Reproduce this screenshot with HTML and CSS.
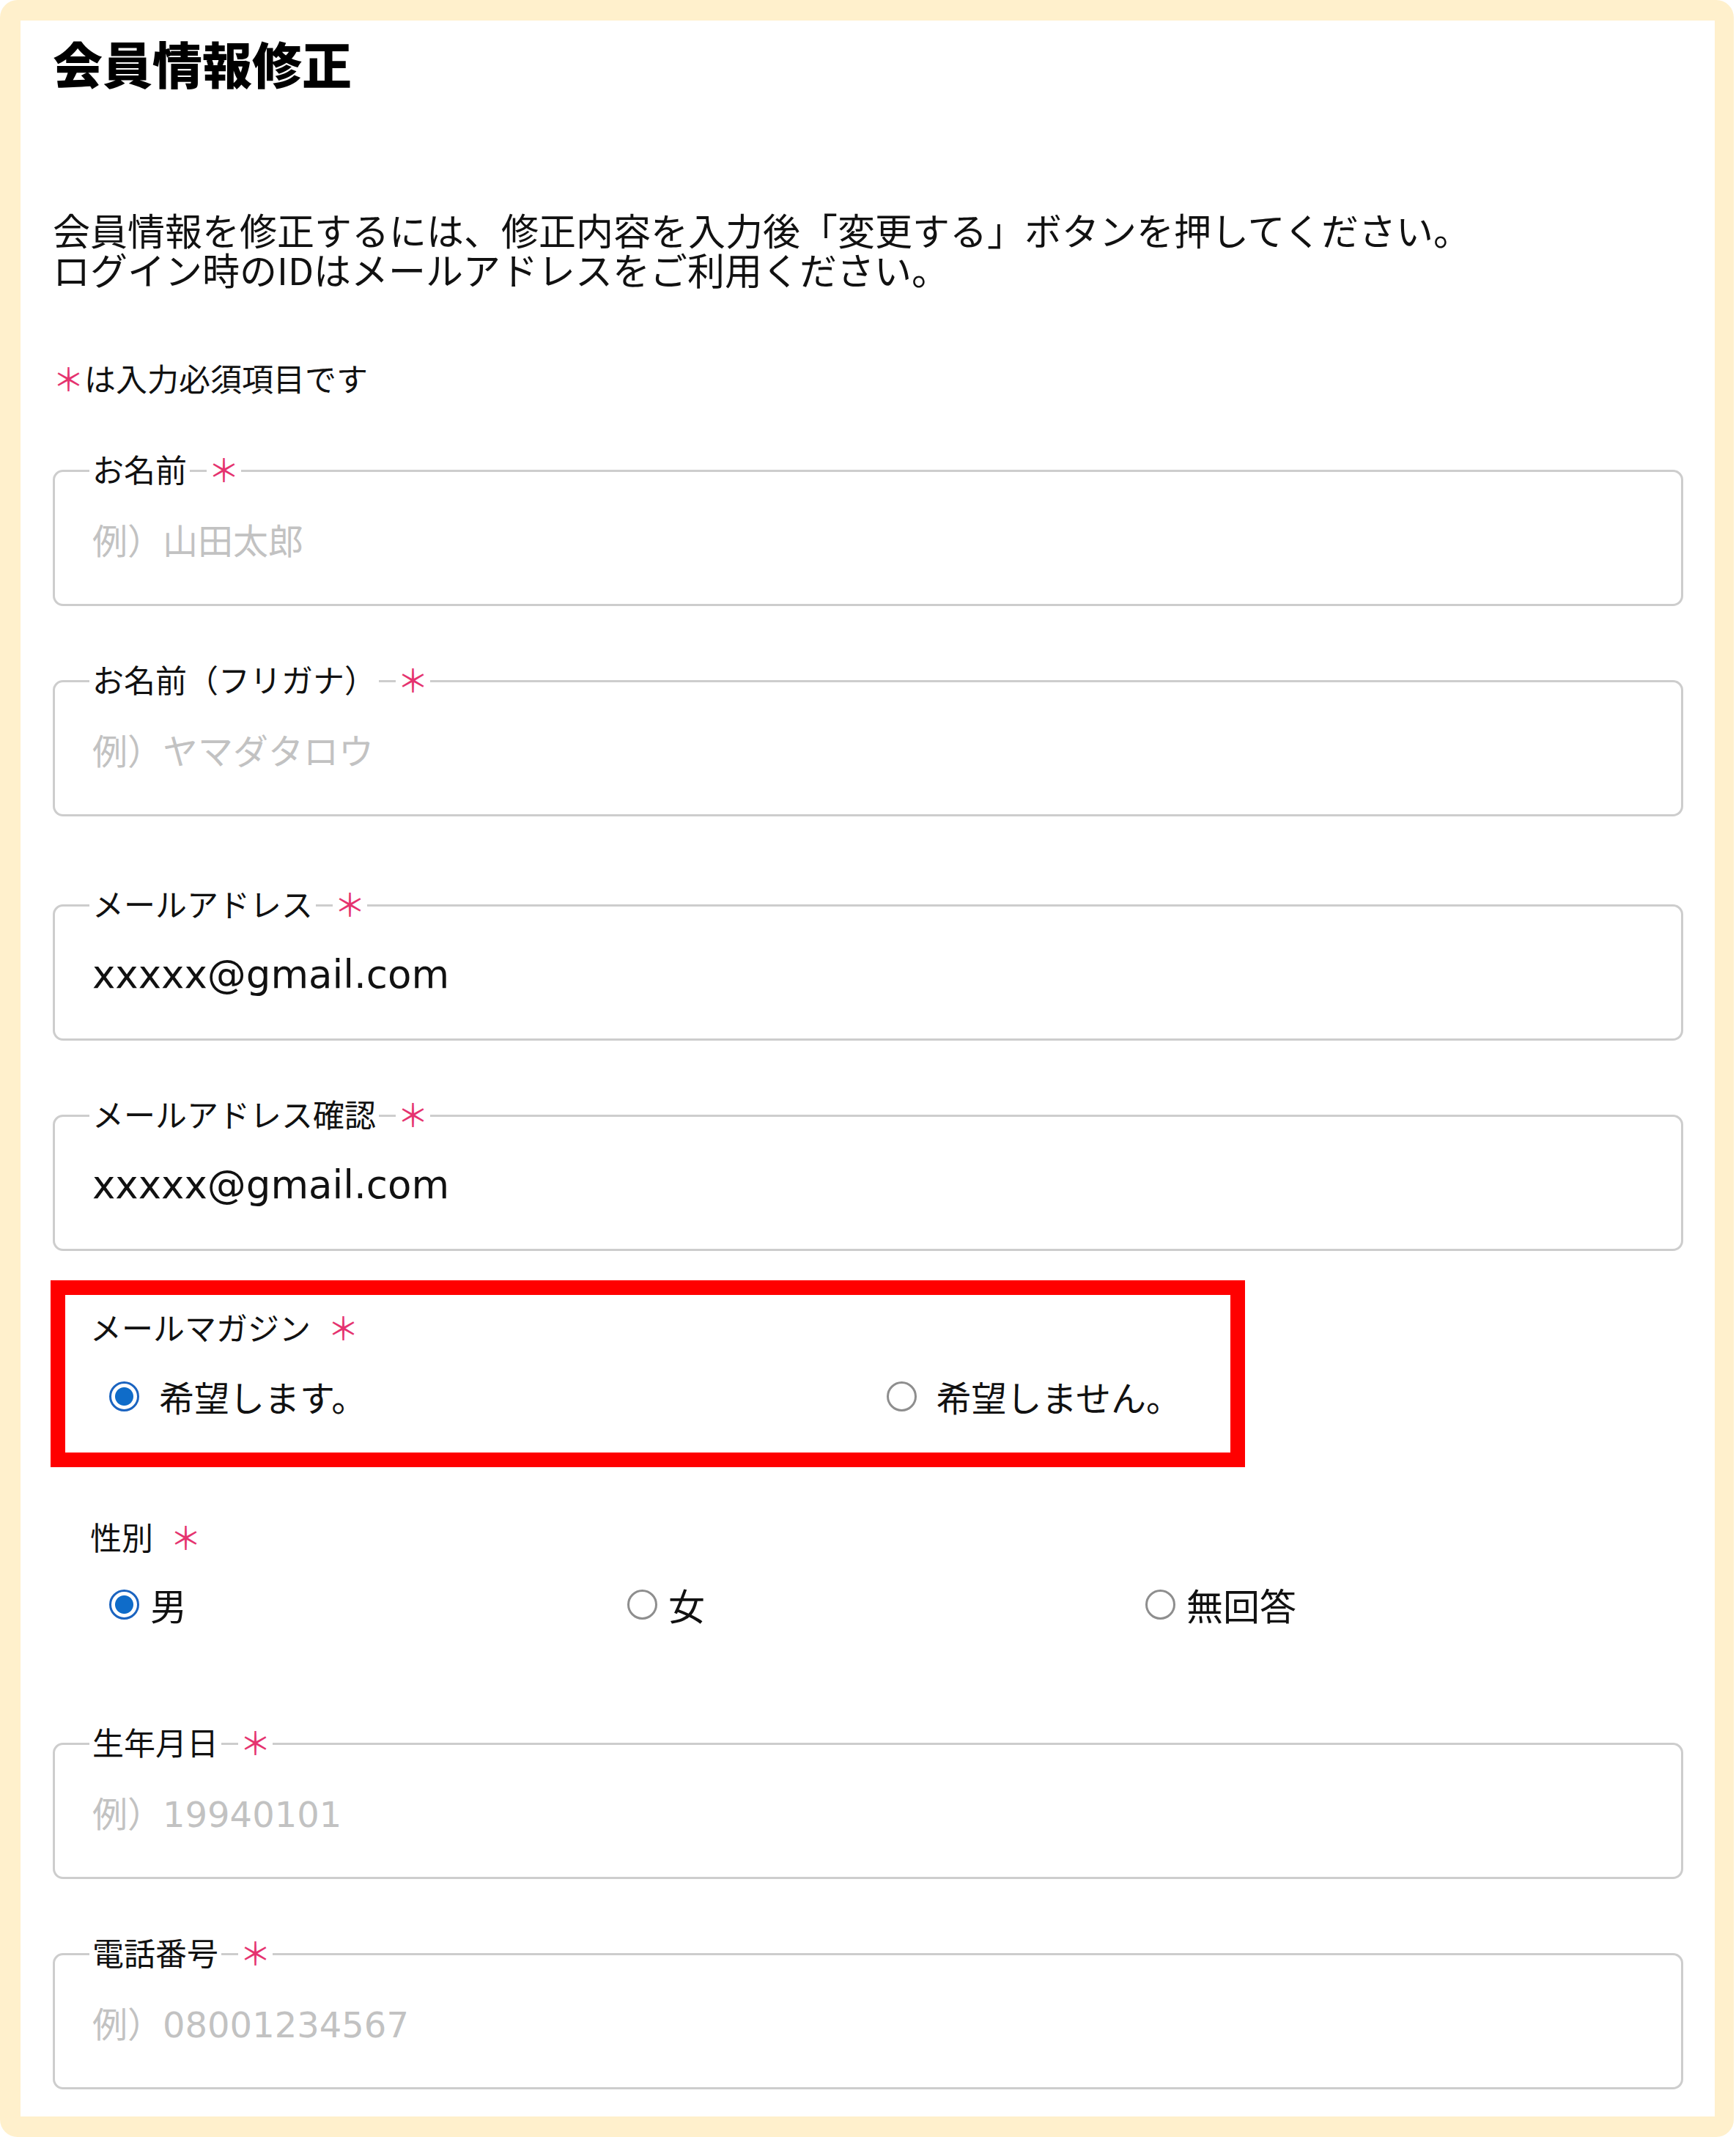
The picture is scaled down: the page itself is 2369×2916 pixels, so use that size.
FILE: index.html
```html
<!DOCTYPE html>
<html lang="ja">
<head>
<meta charset="utf-8">
<title>会員情報修正</title>
<link rel="stylesheet" href="styles.css">
</head>
<body>
<div class="frame">
  <main class="panel">
    <h1 class="title">会員情報修正</h1>
    <p class="lead">会員情報を修正するには、修正内容を入力後「変更する」ボタンを押してください。<br>ログイン時のIDはメールアドレスをご利用ください。</p>
    <p class="note"><span class="req">＊</span>は入力必須項目です</p>

    <form class="form">
      <div class="field">
        <label class="field-label"><span class="lbl">お名前</span><span class="req star">＊</span></label>
        <input class="input" type="text" placeholder="例）山田太郎">
      </div>
      <div class="field">
        <label class="field-label"><span class="lbl">お名前（フリガナ）</span><span class="req star">＊</span></label>
        <input class="input" type="text" placeholder="例）ヤマダタロウ">
      </div>
      <div class="field field-wide-gap">
        <label class="field-label"><span class="lbl">メールアドレス</span><span class="req star">＊</span></label>
        <input class="input input-value" type="email" value="xxxxx@gmail.com">
      </div>
      <div class="field">
        <label class="field-label"><span class="lbl">メールアドレス確認</span><span class="req star">＊</span></label>
        <input class="input input-value" type="email" value="xxxxx@gmail.com">
      </div>

      <div class="choice choice-magazine">
        <div class="choice-label">メールマガジン<span class="req star-plain">＊</span></div>
        <div class="options options-two">
          <label class="opt opt-magazine"><input class="radio" type="radio" name="magazine" checked>希望します。</label>
          <label class="opt opt-magazine"><input class="radio" type="radio" name="magazine">希望しません。</label>
        </div>
        <div class="highlight"></div>
      </div>

      <div class="choice choice-gender">
        <div class="choice-label">性別<span class="req star-plain">＊</span></div>
        <div class="options options-three">
          <label class="opt opt-gender"><input class="radio" type="radio" name="gender" checked>男</label>
          <label class="opt opt-gender"><input class="radio" type="radio" name="gender">女</label>
          <label class="opt opt-gender"><input class="radio" type="radio" name="gender">無回答</label>
        </div>
      </div>

      <div class="field field-after-choice">
        <label class="field-label"><span class="lbl">生年月日</span><span class="req star">＊</span></label>
        <input class="input input-num" type="text" placeholder="例）19940101">
      </div>
      <div class="field">
        <label class="field-label"><span class="lbl">電話番号</span><span class="req star">＊</span></label>
        <input class="input input-num" type="tel" placeholder="例）08001234567">
      </div>
    </form>
  </main>
</div>
</body>
</html>
```

FILE: styles.css
```css
* {
  box-sizing: border-box;
}

html,
body {
  margin: 0;
  padding: 0;
  background: #ffffff;
}

body {
  font-family: "Noto Sans CJK JP", "Noto Sans", sans-serif;
  color: #111111;
}

.frame {
  width: 2366px;
  height: 2916px;
  background: #fff0cc;
  border-radius: 24px;
  padding: 28px 26px 28px 28px;
}

.panel {
  display: block;
  height: 100%;
  background: #ffffff;
  padding: 24px 43px 0 44px;
}

.title {
  margin: 0;
  font-size: 68px;
  line-height: 68px;
  font-weight: 900;
  color: #000000;
}

.lead {
  margin: 166px 0 0;
  font-size: 51px;
  line-height: 54px;
  white-space: nowrap;
}

.note {
  margin: 100px 0 0;
  font-size: 43px;
  line-height: 43px;
}

.req {
  color: #e5336f;
}

.form {
  margin-top: 104px;
}

/* outlined text fields */
.field {
  position: relative;
  height: 186px;
  margin-top: 101px;
  padding: 65px 51px 0;
  border: 3px solid #cdcdcd;
  border-radius: 14px;
}

.field:first-child {
  margin-top: 0;
}

.field-wide-gap {
  margin-top: 120px;
}

.field-after-choice {
  margin-top: 164px;
}

.field-label {
  position: absolute;
  top: -26px;
  left: 47px;
  display: flex;
  font-size: 43px;
  line-height: 43px;
  color: #111111;
}

.lbl {
  background: #ffffff;
  padding: 0 4px;
}

.star {
  background: #ffffff;
  margin-left: 23px;
  padding: 0 2px;
}

.input {
  display: block;
  width: 100%;
  height: 52px;
  margin: 0;
  padding: 0;
  border: none;
  outline: none;
  background: transparent;
  font-family: "Noto Sans CJK JP", "Noto Sans", sans-serif;
  font-size: 48px;
  color: #111111;
}

.input::placeholder {
  color: #c2c2c2;
  opacity: 1;
}

.input-value {
  height: 66px;
  margin-top: -6px;
  font-family: "DejaVu Sans", "Noto Sans CJK JP", sans-serif;
  font-size: 53px;
  color: #111111;
}

.input-num {
  margin-top: 4px;
  font-family: "DejaVu Sans", "Noto Sans CJK JP", sans-serif;
}

/* radio groups */
.choice {
  position: relative;
}

.choice-magazine {
  margin-top: 82px;
}

.choice-gender {
  margin-top: 145px;
}

.choice-label {
  padding-left: 51px;
  font-size: 43px;
  line-height: 42px;
  height: 42px;
}

.star-plain {
  margin-left: 23px;
}

.options {
  display: grid;
  padding: 0 27px 0 77px;
  height: 50px;
}

.options-two {
  grid-template-columns: 1fr 1fr;
  margin-top: 49px;
}

.options-three {
  grid-template-columns: 1fr 1fr 1fr;
  margin-top: 47px;
}

.opt {
  display: flex;
  align-items: center;
  height: 50px;
  line-height: 50px;
  white-space: nowrap;
}

.opt-magazine {
  font-size: 48px;
}

.opt-gender {
  font-size: 50px;
}

.radio {
  appearance: none;
  -webkit-appearance: none;
  flex: none;
  width: 41px;
  height: 41px;
  margin: 0;
  border: 3px solid #8e8e8e;
  border-radius: 50%;
  background: #ffffff;
}

.radio:checked {
  border-color: #1b64c0;
  background: radial-gradient(circle, #0f6cc9 0 12px, #ffffff 13px);
}

.opt-magazine .radio {
  margin-right: 27px;
}

.opt-gender .radio {
  margin-right: 15px;
}

/* red annotation frame drawn over the mail-magazine group */
.highlight {
  position: absolute;
  left: -3px;
  top: -42px;
  width: 1630px;
  height: 255px;
  border: 20px solid #ff0000;
  pointer-events: none;
}
```
